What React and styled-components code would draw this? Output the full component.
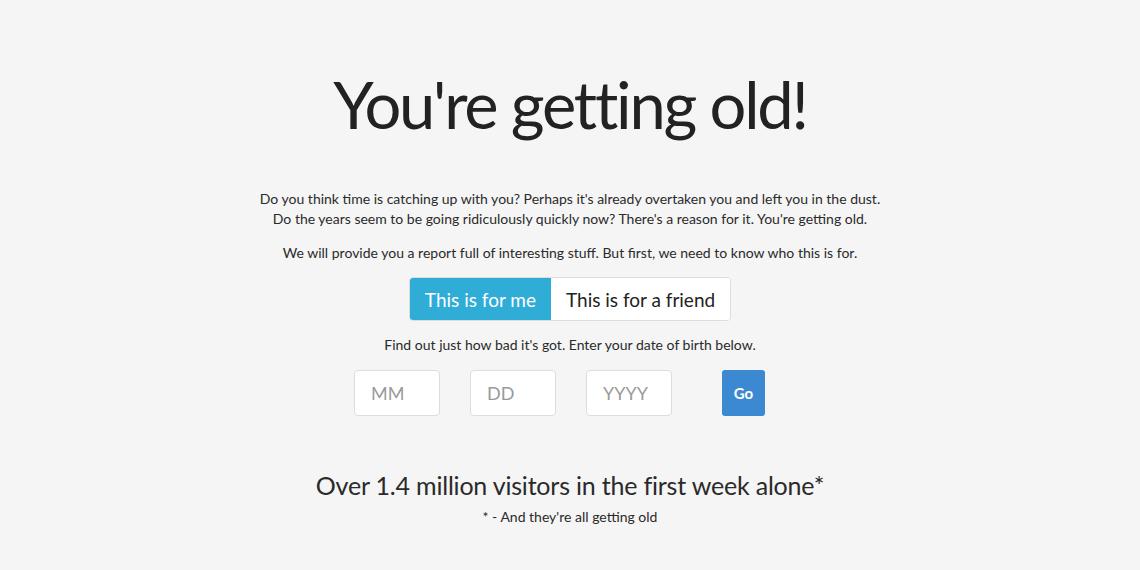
import React from "react";
import styled, { createGlobalStyle } from "styled-components";

const Global = createGlobalStyle`
  html, body { margin: 0; padding: 0; background: #f5f5f5; }
  body { font-family: Lato, "Open Sans", sans-serif; color: #333; }
`;

const Page = styled.main`
  display: flex;
  flex-direction: column;
  align-items: center;
  text-align: center;
  padding-top: 62px;
`;

const Title = styled.h1`
  margin: 0;
  font-size: 65px;
  font-weight: 400;
  line-height: 84px;
  color: #222;
  letter-spacing: -2.2px;
`;

const Lead = styled.p`
  margin: ${(p) => p.$mt || 0}px 0 0;
  font-size: 14px;
  line-height: 20px;
  color: #2a2a2a;
`;

const Toggle = styled.div`
  display: flex;
  margin-top: 14px;
  border: 1px solid #ddd;
  border-radius: 4px;
  overflow: hidden;
  background: #fff;
`;

const ToggleButton = styled.button`
  height: 42px;
  padding: 0 15px;
  border: 0;
  font-family: inherit;
  font-size: 19px;
  background: ${(p) => (p.$active ? "#2fadd7" : "#fff")};
  color: ${(p) => (p.$active ? "#fff" : "#222")};
  cursor: pointer;
`;

const DateRow = styled.form`
  display: flex;
  align-items: center;
  gap: 30px;
  margin-top: 15px;
`;

const DateInput = styled.input`
  box-sizing: border-box;
  width: 86px;
  height: 46px;
  padding: 0 16px;
  border: 1px solid #ddd;
  border-radius: 4px;
  background: #fff;
  font-family: inherit;
  font-size: 18px;
  color: #333;
  &::placeholder { color: #9a9a9a; }
`;

const GoButton = styled.button`
  box-sizing: border-box;
  width: 43px;
  height: 46px;
  margin: 0 21px 0 20px;
  border: 0;
  border-radius: 3px;
  background: #3b89d0;
  color: #fff;
  font-family: inherit;
  font-size: 15px;
  font-weight: 700;
  cursor: pointer;
`;

const Stat = styled.h2`
  margin: 53px 0 0;
  font-size: 25px;
  font-weight: 400;
  line-height: 32px;
  color: #2a2a2a;
  letter-spacing: -0.2px;
`;

export default function App() {
  return (
    <>
      <Global />
      <Page>
        <Title>You're getting old!</Title>
        <Lead $mt={43}>
          Do you think time is catching up with you? Perhaps it's already overtaken you and left you in the dust.
          <br />
          Do the years seem to be going ridiculously quickly now? There's a reason for it. You're getting old.
        </Lead>
        <Lead $mt={14}>
          We will provide you a report full of interesting stuff. But first, we need to know who this is for.
        </Lead>
        <Toggle>
          <ToggleButton $active>This is for me</ToggleButton>
          <ToggleButton>This is for a friend</ToggleButton>
        </Toggle>
        <Lead $mt={14}>Find out just how bad it's got. Enter your date of birth below.</Lead>
        <DateRow onSubmit={(e) => e.preventDefault()}>
          <DateInput placeholder="MM" />
          <DateInput placeholder="DD" />
          <DateInput placeholder="YYYY" />
          <GoButton type="submit">Go</GoButton>
        </DateRow>
        <Stat>Over 1.4 million visitors in the first week alone*</Stat>
        <Lead $mt={6}>* - And they're all getting old</Lead>
      </Page>
    </>
  );
}
